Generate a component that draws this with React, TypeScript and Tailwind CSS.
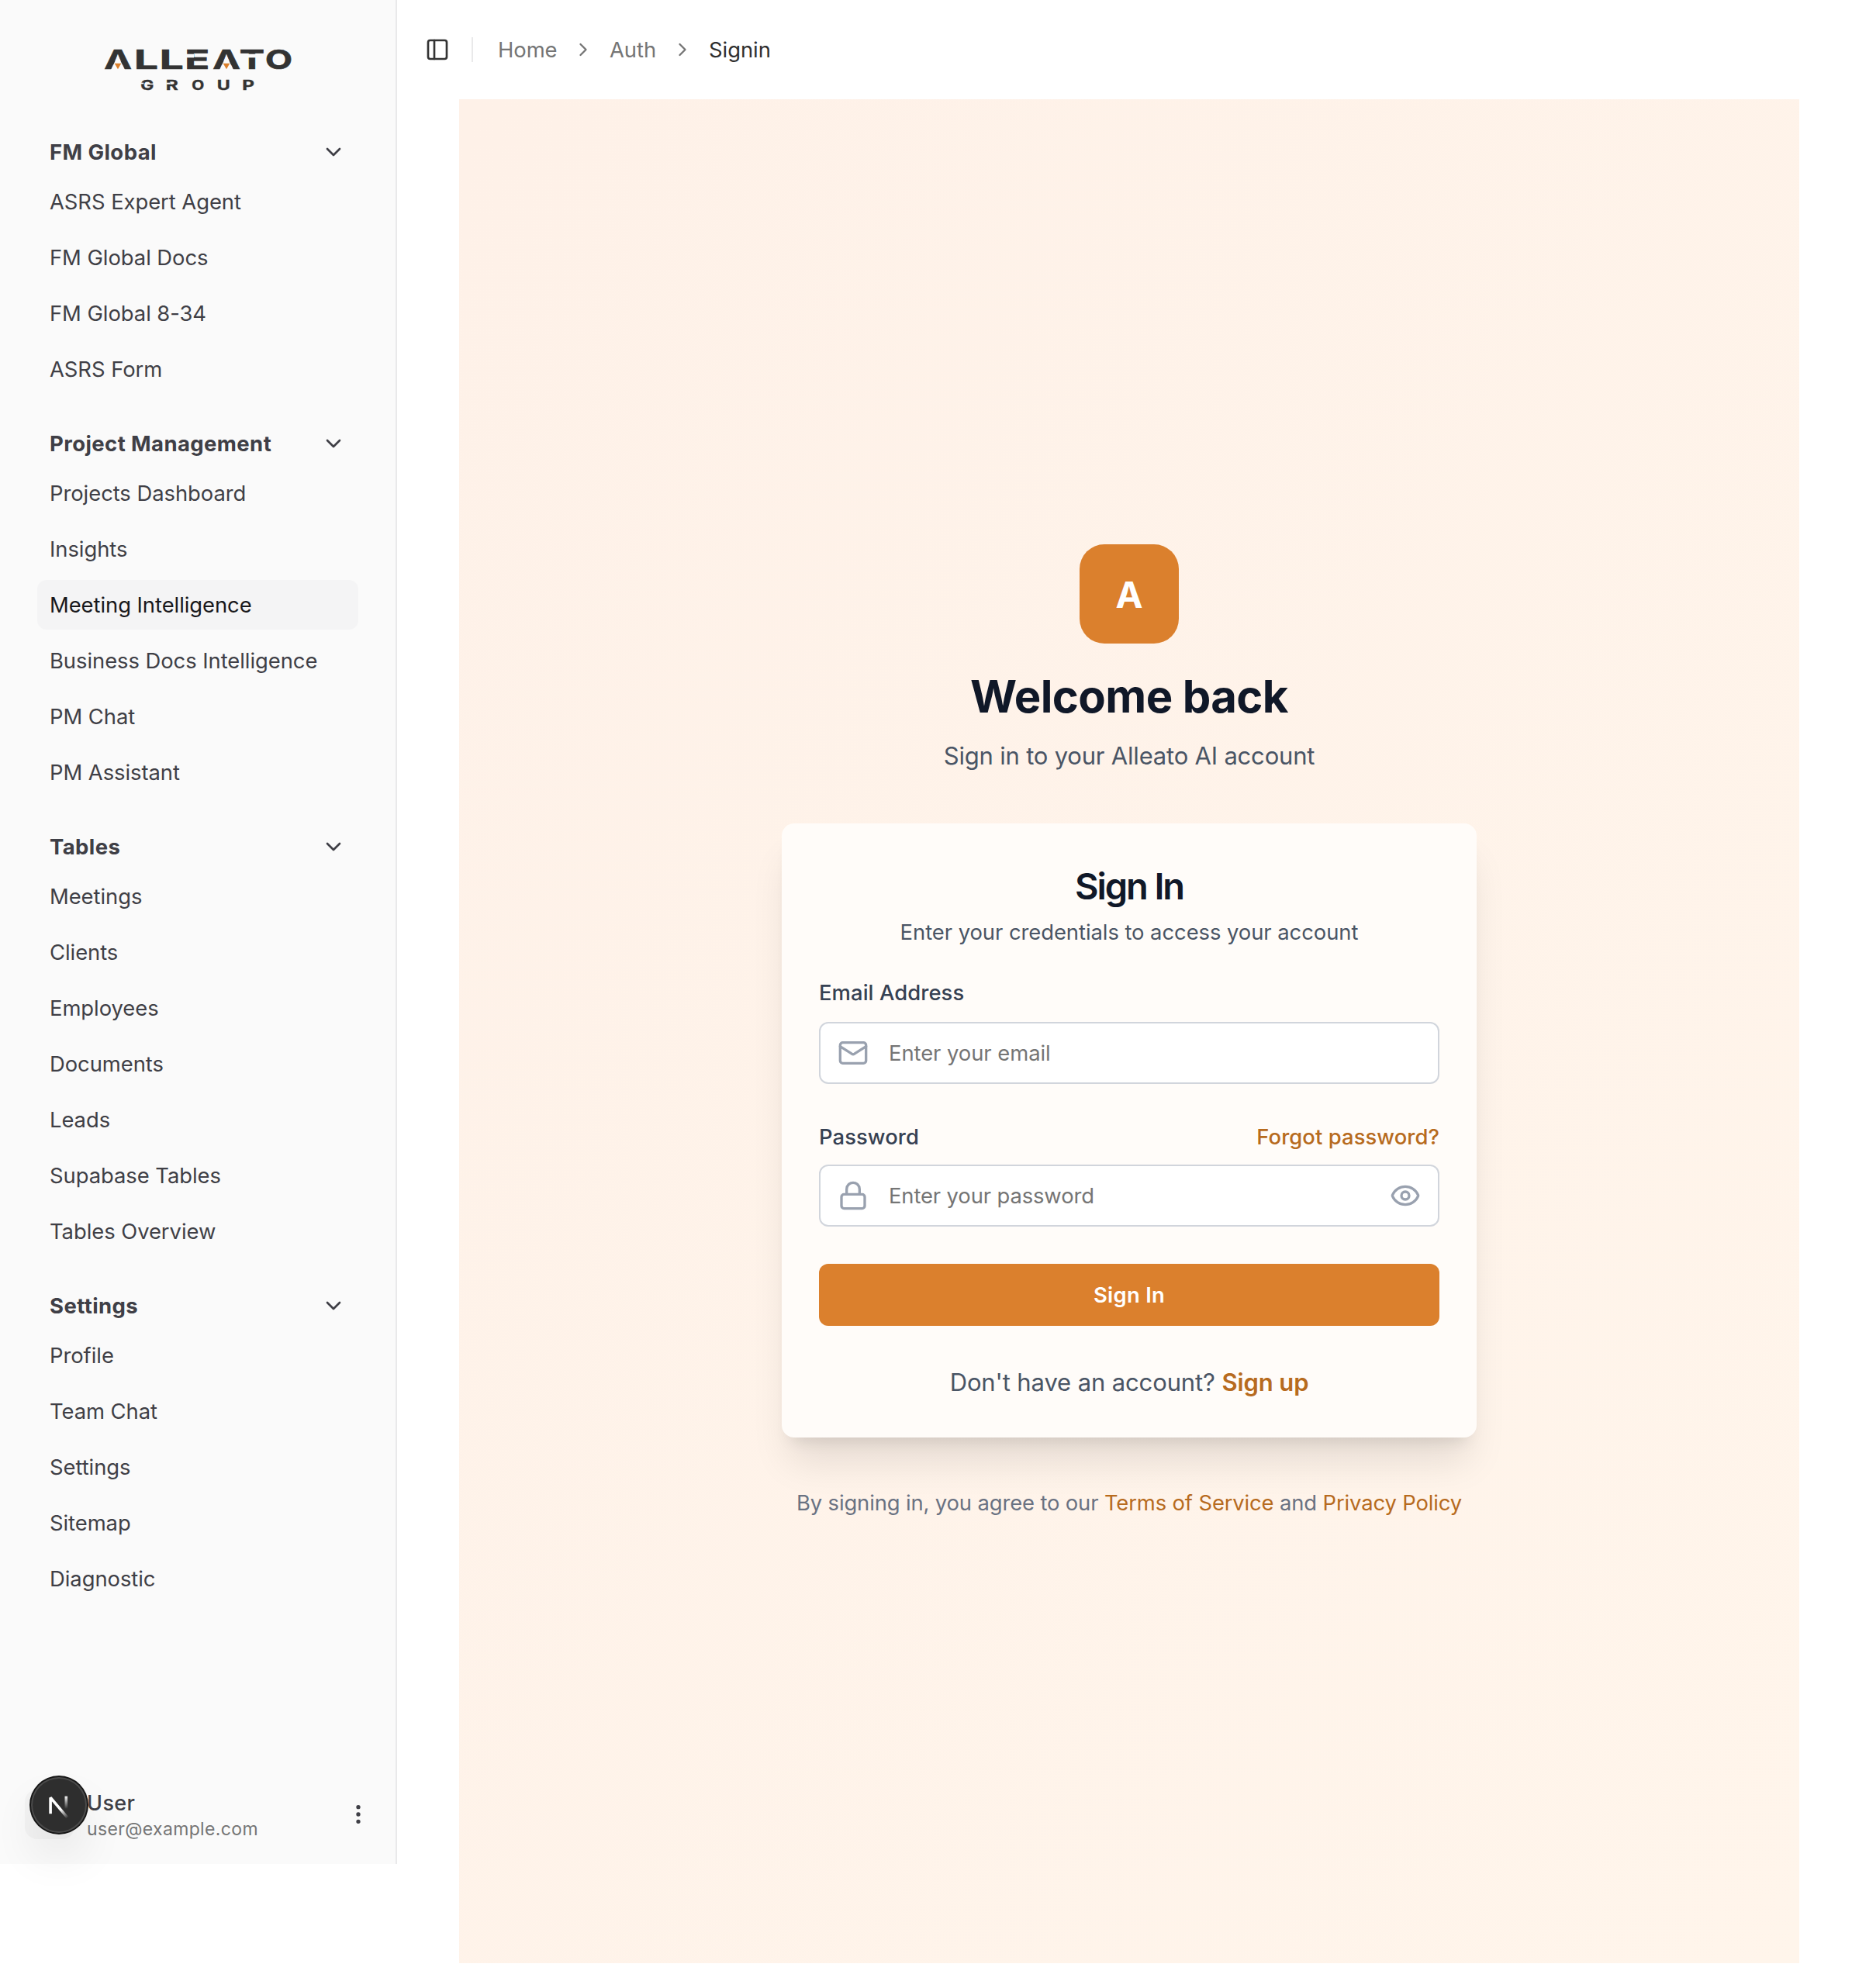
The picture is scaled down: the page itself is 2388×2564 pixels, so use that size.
import React from "react";
import {
  ChevronDown,
  ChevronRight,
  EllipsisVertical,
  Eye,
  Lock,
  Mail,
  PanelLeft,
} from "lucide-react";

type Section = { title: string; items: string[] };

const SECTIONS: Section[] = [
  {
    title: "FM Global",
    items: ["ASRS Expert Agent", "FM Global Docs", "FM Global 8-34", "ASRS Form"],
  },
  {
    title: "Project Management",
    items: [
      "Projects Dashboard",
      "Insights",
      "Meeting Intelligence",
      "Business Docs Intelligence",
      "PM Chat",
      "PM Assistant",
    ],
  },
  {
    title: "Tables",
    items: [
      "Meetings",
      "Clients",
      "Employees",
      "Documents",
      "Leads",
      "Supabase Tables",
      "Tables Overview",
    ],
  },
  {
    title: "Settings",
    items: ["Profile", "Team Chat", "Settings", "Sitemap", "Diagnostic"],
  },
];

const ACTIVE = "Meeting Intelligence";

type Glyph = { ch: string; x: number; w: number };

const WORDMARK: Glyph[] = [
  { ch: "A", x: 73, w: 107 },
  { ch: "L", x: 189, w: 93 },
  { ch: "L", x: 287, w: 93 },
  { ch: "E", x: 385, w: 96 },
  { ch: "A", x: 493, w: 107 },
  { ch: "T", x: 596, w: 97 },
  { ch: "O", x: 696, w: 105 },
];

const SUBMARK: Glyph[] = [
  { ch: "G", x: 214, w: 51 },
  { ch: "R", x: 311, w: 48 },
  { ch: "O", x: 412, w: 48 },
  { ch: "U", x: 509, w: 51 },
  { ch: "P", x: 607, w: 47 },
];

function Logo() {
  return (
    <svg width="241" height="54" viewBox="75 69 723 162" className="overflow-visible">
      {WORDMARK.map((g, i) => (
        <text
          key={i}
          x={g.x}
          y={148}
          textLength={g.w}
          lengthAdjust="spacingAndGlyphs"
          className="fill-[#333333] stroke-[#333333] stroke-2 font-bold text-[104px]"
        >
          {g.ch}
        </text>
      ))}
      {/* open counters of the two A shapes, each with its orange marker */}
      {[0, 420].map((dx) => (
        <g key={dx} transform={`translate(${dx} 0)`}>
          <polygon points="99,151 126,94 153,151" fill="#fafafa" />
          <polygon points="113,125 139,125 126,148" fill="#db802d" />
        </g>
      ))}
      {/* stencil cuts in E and T */}
      <rect x="390" y="89" width="30" height="14" fill="#fafafa" />
      <rect x="628" y="89" width="32" height="14" fill="#fafafa" />
      {SUBMARK.map((g, i) => (
        <text
          key={i}
          x={g.x}
          y={228}
          textLength={g.w}
          lengthAdjust="spacingAndGlyphs"
          className="fill-[#333333] stroke-[#333333] stroke-1 font-bold text-[50px]"
        >
          {g.ch}
        </text>
      ))}
      <rect x="212" y="200" width="14" height="5" fill="#fafafa" />
      <rect x="314" y="200" width="14" height="6" fill="#fafafa" />
    </svg>
  );
}

function DevBadge() {
  return (
    <div className="absolute left-[40px] top-[2292px] size-[72px] rounded-full bg-[#2e2e2e] shadow-[0_0_0_2px_#171717,inset_0_0_0_2px_rgba(255,255,255,0.14),0_32px_64px_-16px_rgba(0,0,0,0.24)]">
      <svg width="72" height="72" viewBox="0 0 72 72" fill="none" strokeWidth="3.6">
        <defs>
          <linearGradient id="diag" gradientUnits="userSpaceOnUse" x1="38" y1="42" x2="47" y2="53">
            <stop stopColor="#fff" />
            <stop offset="1" stopColor="#fff" stopOpacity="0" />
          </linearGradient>
          <linearGradient id="bar" gradientUnits="userSpaceOnUse" x1="45" y1="24" x2="45" y2="41">
            <stop stopColor="#fff" />
            <stop offset="1" stopColor="#fff" stopOpacity="0" />
          </linearGradient>
        </defs>
        <path d="M46.8 52.2 25.1 26.4V47.2" stroke="url(#diag)" strokeLinejoin="bevel" />
        <path d="M45.3 24.7V45" stroke="url(#bar)" />
      </svg>
    </div>
  );
}

function Sidebar() {
  return (
    <aside className="flex h-[2404px] w-[512px] shrink-0 flex-col border-r-2 border-[#e9e9ea] bg-[#fafafa]">
      <div className="flex h-[164px] justify-center pt-[63px]">
        <Logo />
      </div>
      <nav className="flex flex-1 flex-col gap-8 px-12">
        {SECTIONS.map((s) => (
          <div key={s.title}>
            <div className="flex h-16 items-center justify-between px-4 text-[27.5px] font-bold tracking-[0.4px] text-[#3f3f46]">
              <span>{s.title}</span>
              <ChevronDown size={32} strokeWidth={2} />
            </div>
            <ul className="flex flex-col gap-2">
              {s.items.map((item) => (
                <li
                  key={item}
                  className={
                    item === ACTIVE
                      ? "flex h-16 items-center rounded-xl bg-[#f4f4f5] px-4 text-[#18181b]"
                      : "flex h-16 items-center px-4 text-[#3f3f46]"
                  }
                >
                  {item}
                </li>
              ))}
            </ul>
          </div>
        ))}
      </nav>
      <div className="p-4">
        <div className="flex h-24 items-center px-4">
          <div className="size-16 rounded-2xl bg-[#f3f3f3]" />
          <div className="ml-4 flex-1 pt-0.5">
            <div className="text-[27px] font-medium leading-[35px] tracking-[0.4px] text-[#3f3f46]">User</div>
            <div className="text-[23px] leading-8 tracking-[0.35px] text-[#757575]">user@example.com</div>
          </div>
          <EllipsisVertical size={32} className="text-[#3f3f46]" />
        </div>
      </div>
    </aside>
  );
}

function Breadcrumbs() {
  return (
    <header className="flex h-32 items-center pl-9 text-[#757575]">
      <PanelLeft size={32} className="text-[#333333]" />
      <div className="ml-7 h-8 w-0.5 bg-[#e9e9ea]" />
      <div className="ml-8 flex items-center gap-5">
        <span className="w-[76px]">Home</span>
        <ChevronRight size={28} />
        <span>Auth</span>
        <ChevronRight size={28} />
        <span className="text-[#2f2f2f]">Signin</span>
      </div>
    </header>
  );
}

const FIELD =
  "flex h-20 items-center rounded-xl border-2 border-[#d1d5dc] bg-white px-[22px] text-[#99a1af]";

function SignInCard() {
  return (
    <div className="mt-[63px] w-[896px] rounded-2xl bg-[#fffcf9] px-12 pb-[47px] pt-12 shadow-[0_40px_50px_-10px_rgba(0,0,0,0.1),0_16px_20px_-12px_rgba(0,0,0,0.1)]">
      <h2 className="text-center text-[47px] font-semibold leading-[66px] tracking-[-2.1px] text-[#101828]">
        Sign In
      </h2>
      <p className="mt-1.5 text-center leading-10 text-[#4a5565]">
        Enter your credentials to access your account
      </p>
      <div className="mt-[38px] flex h-10 items-center font-medium tracking-[0.08px] text-[#364153]">
        Email Address
      </div>
      <div className={`${FIELD} mt-[18px]`}>
        <Mail size={40} />
        <span className="ml-[26px] text-[#757575]">Enter your email</span>
      </div>
      <div className="mt-12 flex h-10 items-center justify-between font-medium tracking-[0.08px] text-[#364153]">
        <span>Password</span>
        <span className="text-[#b76b1e]">Forgot password?</span>
      </div>
      <div className={`${FIELD} mt-4`}>
        <Lock size={40} />
        <span className="ml-[26px] flex-1 tracking-[-0.12px] text-[#757575]">Enter your password</span>
        <Eye size={40} />
      </div>
      <button className="mt-12 block h-20 w-full rounded-xl bg-[#db802d] font-semibold tracking-[0.3px] text-white">
        Sign In
      </button>
      <p className="mt-12 text-center text-[31px] leading-[49px] tracking-[-0.12px] text-[#4a5565]">
        Don't have an account? <span className="font-semibold text-[#b76b1e]">Sign up</span>
      </p>
    </div>
  );
}

export default function App() {
  return (
    <div className="relative flex h-[2564px] w-[2388px] overflow-hidden bg-white font-['Inter',sans-serif] text-[27.4px] leading-10 tracking-[-0.05px]">
      <Sidebar />
      <div className="flex flex-1 flex-col">
        <Breadcrumbs />
        <main className="ml-20 flex h-[2404px] w-[1728px] flex-col items-center justify-center bg-linear-to-br from-[#fef1e8] to-[#fff5eb]">
          <div className="flex size-32 items-center justify-center rounded-[32px] bg-[#db802d] pt-0.5 text-[47px] font-bold text-white">
            A
          </div>
          <h1 className="mt-8 text-[58px] font-bold leading-[72px] tracking-[-0.6px] text-[#101828]">
            Welcome back
          </h1>
          <p className="mt-4 text-[31px] leading-[49px] tracking-[-0.2px] text-[#4a5565]">
            Sign in to your Alleato AI account
          </p>
          <SignInCard />
          <p className="mt-16 leading-10 tracking-[-0.13px] text-[#6a7282]">
            By signing in, you agree to our <span className="text-[#b76b1e]">Terms of Service</span> and{" "}
            <span className="text-[#b76b1e]">Privacy Policy</span>
          </p>
        </main>
      </div>
      <DevBadge />
    </div>
  );
}
